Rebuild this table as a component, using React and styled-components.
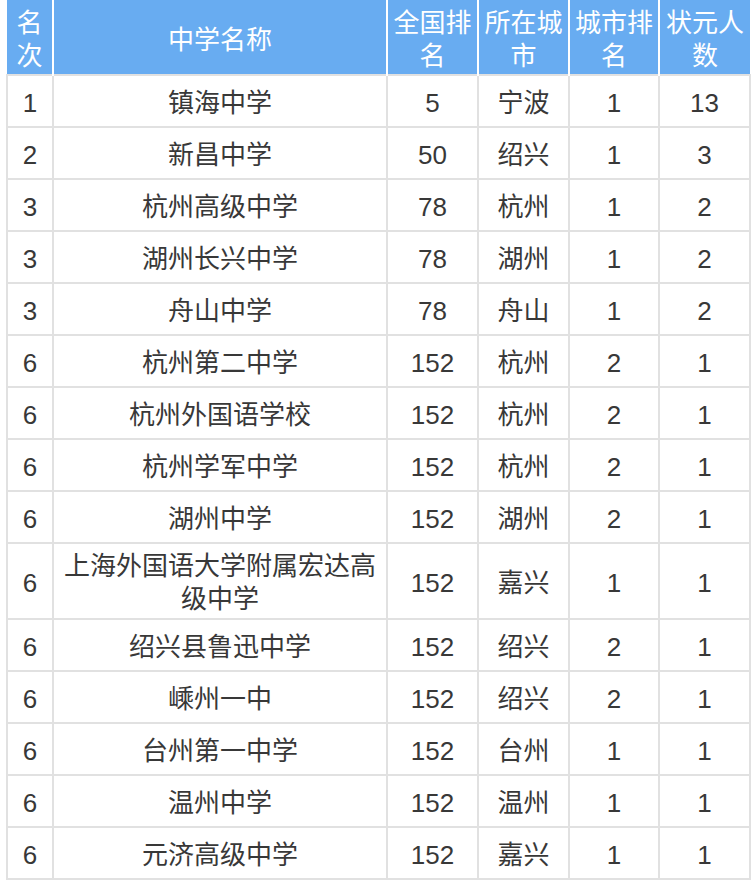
import React from "react";
import styled, { createGlobalStyle } from "styled-components";

const Global = createGlobalStyle`
  html, body { margin: 0; padding: 0; background: #fff; }
  body { font-family: "Liberation Sans", "Noto Sans CJK SC", sans-serif; }
`;

const Wrap = styled.div`
  padding: 0 5px 0 6px;
  width: 754px;
  box-sizing: border-box;
`;

const Table = styled.table`
  width: 743px;
  table-layout: fixed;
  border-collapse: collapse;
  font-size: 26px;
  line-height: 33px;
  color: #383838;
`;

const Th = styled.th`
  background: #68acf1;
  color: #fff;
  font-weight: normal;
  height: 75px;
  padding: 7px 2px 1px;
  box-sizing: border-box;
  border-left: 2px solid #fff;
  text-align: center;
  vertical-align: middle;
  &:first-child { border-left: none; }
`;

const Td = styled.td`
  height: 52px;
  padding: 6px 4px 2px;
  box-sizing: border-box;
  border: 2px solid #e1e1e1;
  text-align: center;
  vertical-align: middle;
`;

const cols = [46, 334, 91, 91, 90, 91];
const headers = ["名次", "中学名称", "全国排名", "所在城市", "城市排名", "状元人数"];

const rows = [
  ["1", "镇海中学", "5", "宁波", "1", "13"],
  ["2", "新昌中学", "50", "绍兴", "1", "3"],
  ["3", "杭州高级中学", "78", "杭州", "1", "2"],
  ["3", "湖州长兴中学", "78", "湖州", "1", "2"],
  ["3", "舟山中学", "78", "舟山", "1", "2"],
  ["6", "杭州第二中学", "152", "杭州", "2", "1"],
  ["6", "杭州外国语学校", "152", "杭州", "2", "1"],
  ["6", "杭州学军中学", "152", "杭州", "2", "1"],
  ["6", "湖州中学", "152", "湖州", "2", "1"],
  ["6", "上海外国语大学附属宏达高级中学", "152", "嘉兴", "1", "1"],
  ["6", "绍兴县鲁迅中学", "152", "绍兴", "2", "1"],
  ["6", "嵊州一中", "152", "绍兴", "2", "1"],
  ["6", "台州第一中学", "152", "台州", "1", "1"],
  ["6", "温州中学", "152", "温州", "1", "1"],
  ["6", "元济高级中学", "152", "嘉兴", "1", "1"],
];

export default function App() {
  return (
    <Wrap>
      <Global />
      <Table>
        <colgroup>
          {cols.map((w, i) => (
            <col key={i} style={{ width: w }} />
          ))}
        </colgroup>
        <thead>
          <tr>
            {headers.map((h) => (
              <Th key={h}>{h}</Th>
            ))}
          </tr>
        </thead>
        <tbody>
          {rows.map((r, i) => (
            <tr key={i}>
              {r.map((c, j) => (
                <Td key={j}>{c}</Td>
              ))}
            </tr>
          ))}
        </tbody>
      </Table>
    </Wrap>
  );
}
